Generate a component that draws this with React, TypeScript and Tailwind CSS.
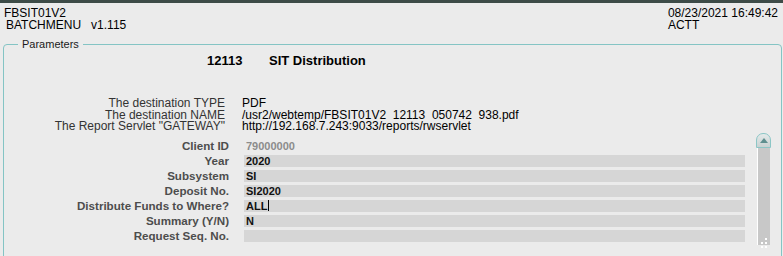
import React from "react";

const rows: { label: string; value: string; muted?: boolean; caret?: boolean; noBox?: boolean }[] = [
  { label: "Client ID", value: "79000000", muted: true, noBox: true },
  { label: "Year", value: "2020" },
  { label: "Subsystem", value: "SI" },
  { label: "Deposit No.", value: "SI2020" },
  { label: "Distribute Funds to Where?", value: "ALL", caret: true },
  { label: "Summary (Y/N)", value: "N" },
  { label: "Request Seq. No.", value: "" },
];

export default function App() {
  return (
    <div
      className="w-[783px] h-[256px] overflow-hidden bg-[#ebebeb] text-black"
      style={{ fontFamily: '"Liberation Sans", Arial, sans-serif' }}
    >
      <div className="h-[3px] bg-[#3d4b47]" />
      <div className="flex justify-between pt-[4px] pl-[4px] pr-[5px] text-[12px] leading-[12px]">
        <div>
          <div>FBSIT01V2</div>
          <div className="whitespace-pre pl-[2px]">BATCHMENU   v1.115</div>
        </div>
        <div>
          <div>08/23/2021 16:49:42</div>
          <div>ACTT</div>
        </div>
      </div>

      <div className="relative mt-[13px] ml-[3px] w-[779px] h-[240px] border border-[#84c4c4] rounded-[4px]">
        <div className="absolute -top-[8px] left-[14px] px-[4px] bg-[#ebebeb] text-[11px] leading-[14px] text-[#1a1a1a]">
          Parameters
        </div>

        <div className="flex pt-[8px] text-[13px] leading-[15px] font-bold">
          <div className="pl-[203px] w-[265px]">12113</div>
          <div>SIT Distribution</div>
        </div>

        <div className="mt-[30px] grid grid-cols-[221px_auto] gap-x-[17px] text-[12px] leading-[11.5px]">
          <div className="text-right text-[#333]">The destination TYPE</div>
          <div>PDF</div>
          <div className="text-right text-[#333]">The destination NAME</div>
          <div className="whitespace-pre">/usr2/webtemp/FBSIT01V2  12113  050742  938.pdf</div>
          <div className="text-right text-[#333]">The Report Servlet "GATEWAY"</div>
          <div>http://192.168.7.243:9033/reports/rwservlet</div>
        </div>

        <div className="flex">
          <div className="flex flex-col pt-[7px]">
            {rows.map((r) => (
              <div key={r.label} className="flex h-[15px] items-start">
                <div className="w-[225px] text-right text-[11.6px] leading-[12px] font-bold text-[#4d4d4d]">
                  {r.label}
                </div>
                <div
                  className={
                    "ml-[15px] w-[501px] h-[12px] pl-[2px] text-[11px] leading-[12px] font-bold " +
                    (r.noBox ? "text-[#8c8c8c]" : "bg-[#d6d6d6] text-[#111]")
                  }
                >
                  {r.value}
                  {r.caret && <span className="inline-block w-[1px] h-[11px] bg-black align-top ml-[1px]" />}
                </div>
              </div>
            ))}
          </div>
          <div className="ml-[11px] flex flex-col w-[15px]">
            <div className="h-[15px] rounded-t-[7px] border border-[#8cc6c6] bg-gradient-to-b from-[#e4eaea] to-[#c9d2d2] flex items-center justify-center">
              <svg width="8" height="5" viewBox="0 0 8 5">
                <polygon points="4,0 8,5 0,5" fill="#5f8f8f" />
              </svg>
            </div>
            <div className="relative flex-1 mx-[1px] bg-[#c8c8c8] border-l border-white h-[110px]">
              <div className="absolute top-[90px] left-[3px] grid grid-cols-2 gap-[2px]">
                <span className="w-[2px] h-[2px]" />
                <span className="w-[2px] h-[2px] bg-white" />
                <span className="w-[2px] h-[2px] bg-white" />
                <span className="w-[2px] h-[2px] bg-white" />
                <span className="w-[2px] h-[2px] bg-white" />
                <span className="w-[2px] h-[2px] bg-white" />
              </div>
            </div>
          </div>
        </div>
      </div>
    </div>
  );
}
